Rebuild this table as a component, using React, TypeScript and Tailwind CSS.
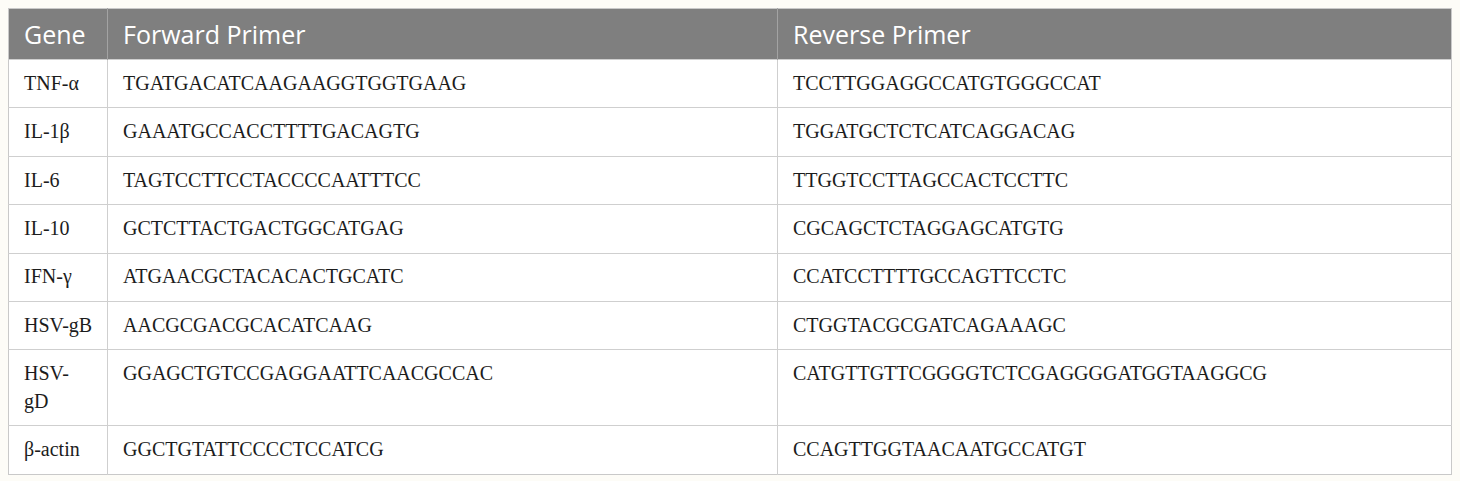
const rows: { gene: React.ReactNode; fwd: string; rev: string }[] = [
  { gene: 'TNF-α', fwd: 'TGATGACATCAAGAAGGTGGTGAAG', rev: 'TCCTTGGAGGCCATGTGGGCCAT' },
  { gene: 'IL-1β', fwd: 'GAAATGCCACCTTTTGACAGTG', rev: 'TGGATGCTCTCATCAGGACAG' },
  { gene: 'IL-6', fwd: 'TAGTCCTTCCTACCCCAATTTCC', rev: 'TTGGTCCTTAGCCACTCCTTC' },
  { gene: 'IL-10', fwd: 'GCTCTTACTGACTGGCATGAG', rev: 'CGCAGCTCTAGGAGCATGTG' },
  { gene: 'IFN-γ', fwd: 'ATGAACGCTACACACTGCATC', rev: 'CCATCCTTTTGCCAGTTCCTC' },
  { gene: 'HSV-gB', fwd: 'AACGCGACGCACATCAAG', rev: 'CTGGTACGCGATCAGAAAGC' },
  {
    gene: (
      <>
        HSV-
        <br />
        gD
      </>
    ),
    fwd: 'GGAGCTGTCCGAGGAATTCAACGCCAC',
    rev: 'CATGTTGTTCGGGGTCTCGAGGGGATGGTAAGGCG',
  },
  { gene: 'β-actin', fwd: 'GGCTGTATTCCCCTCCATCG', rev: 'CCAGTTGGTAACAATGCCATGT' },
];

export default function App() {
  return (
    <div className="min-h-screen bg-[#fdfcf7] p-2">
      <table className="w-[1444px] table-fixed border-collapse border border-[#c9c9c9] bg-white">
        <colgroup>
          <col className="w-[99px]" />
          <col className="w-[670px]" />
          <col />
        </colgroup>
        <thead>
          <tr className="h-[51px] bg-[#7f7f7f] font-['Open_Sans',sans-serif] text-[25px] leading-[30px] text-white">
            <th className="px-[15px] text-left font-normal">Gene</th>
            <th className="border-l border-[#a3a3a3] px-[15px] text-left font-normal">Forward Primer</th>
            <th className="border-l border-[#a3a3a3] px-[15px] text-left font-normal">Reverse Primer</th>
          </tr>
        </thead>
        <tbody className="font-['Liberation_Serif',serif] text-[20px] leading-[27.6px] text-[#1c1c1c]">
          {rows.map((r, i) => (
            <tr key={i} className="border-t border-[#cfcfcf]">
              <td className="whitespace-nowrap px-[15px] py-[9.9px] align-top">{r.gene}</td>
              <td className="border-l border-[#cfcfcf] px-[15px] py-[9.9px] align-top">{r.fwd}</td>
              <td className="border-l border-[#cfcfcf] px-[15px] py-[9.9px] align-top">{r.rev}</td>
            </tr>
          ))}
        </tbody>
      </table>
    </div>
  );
}
